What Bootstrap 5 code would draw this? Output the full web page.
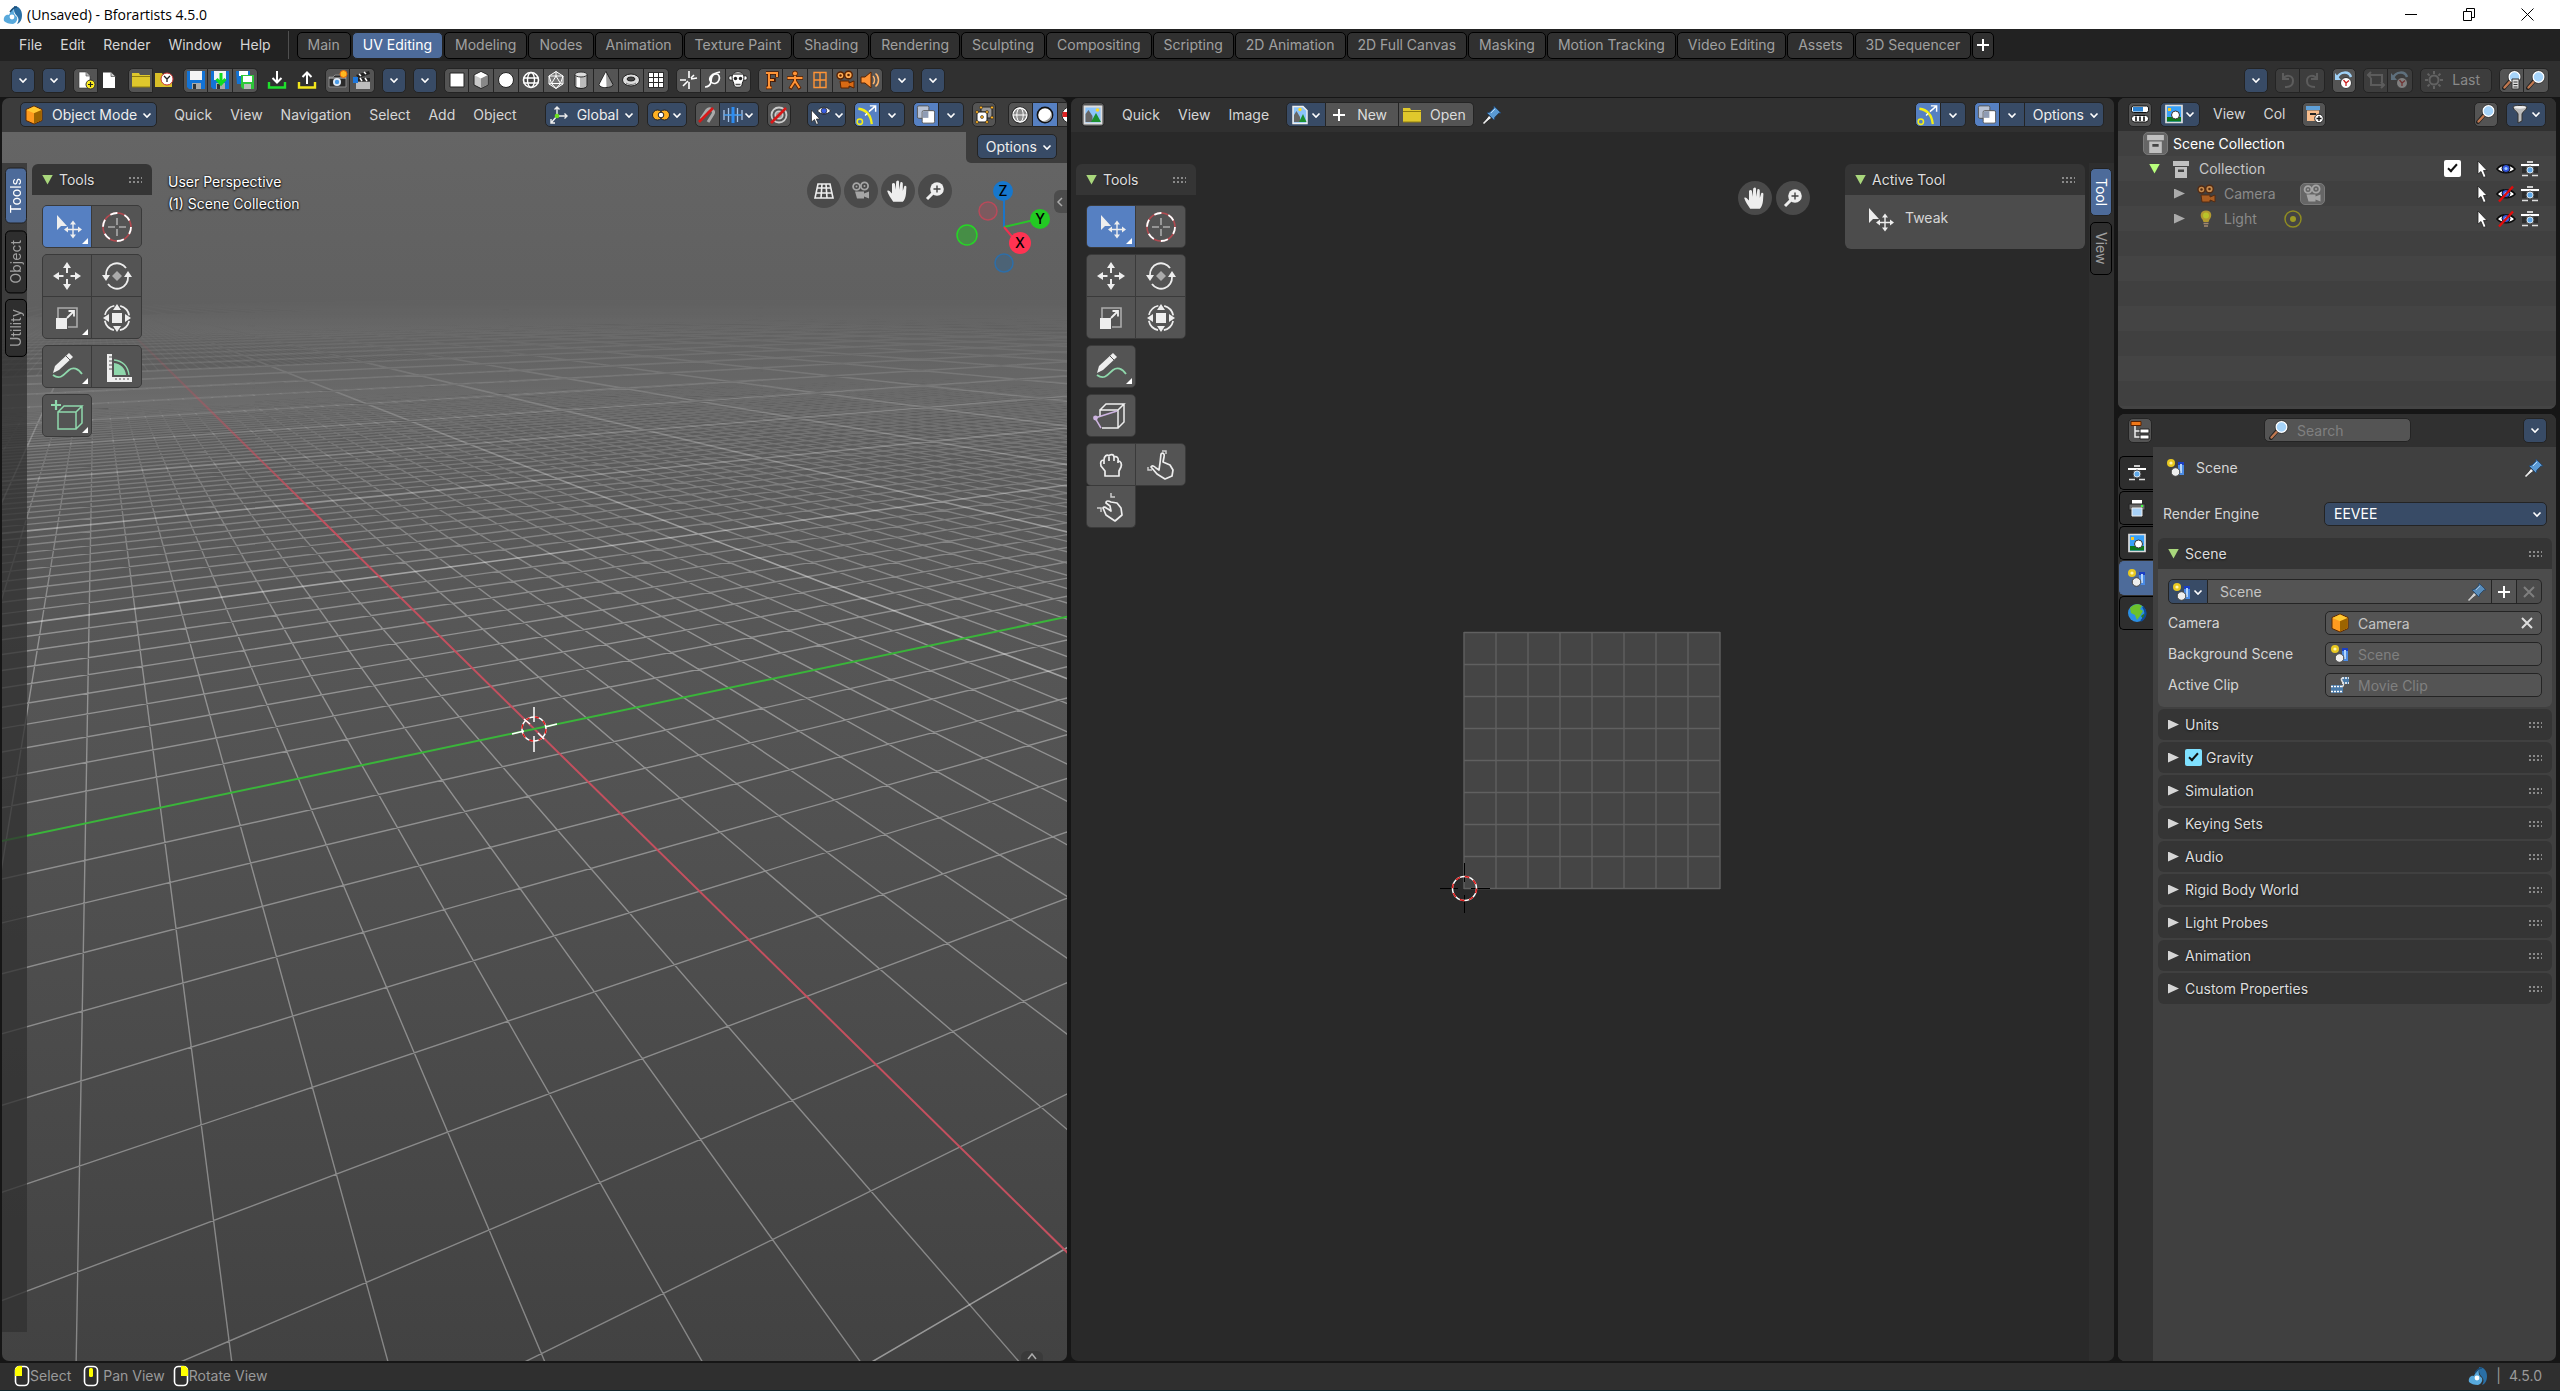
<!DOCTYPE html>
<html lang="en" data-bs-theme="dark">
<head>
<meta charset="utf-8">
<meta name="viewport" content="width=device-width, initial-scale=1">
<title>(Unsaved) - Bforartists 4.5.0</title>
<link rel="stylesheet" href="https://cdn.jsdelivr.net/npm/bootstrap@5.3.0/dist/css/bootstrap.min.css">
<script src="https://cdn.jsdelivr.net/npm/bootstrap@5.3.0/dist/js/bootstrap.bundle.min.js"></script>
<style>
:root{--hdr:#303030;--menu:#384b66;--btnc:#545454;--act:#5680c2;--line:#242424}
body{font-family:Inter,"Liberation Sans",sans-serif;font-size:14px;line-height:20px;color:#d6d6d6;background:#161616;overflow:hidden}
svg{display:block;flex:none}
.i20{width:20px;height:20px}
.i36{width:36px;height:36px}
.titlebar{height:29px;background:#fff;color:#000;font:14px/20px "Open Sans",sans-serif;padding-left:3px}
.titlebar button{width:58px;height:29px;border:0;background:none;display:grid;place-items:center}
.topbar{height:32px;background:#222;padding:2px 0 2px 10px}
.menu-link{color:#d6d6d6;padding:0 9px;text-decoration:none;white-space:nowrap}
.ws-tabs{display:flex;gap:1px}
.ws-tab{height:27px;padding:0 10px;border:1px solid #000;border-radius:5px;background:#303030;color:#a0a0a0;white-space:nowrap}
.ws-tab.active{background:#4d6b9a;color:#fff;border-color:#222}
.toolbar{height:36px;background:var(--hdr);padding:2px 11px 0;gap:7px}
.ub{flex:none;height:25px;min-width:24px;padding:0;border:1px solid var(--line);background:var(--btnc);color:#dcdcdc;border-radius:5px;display:inline-flex;align-items:center;justify-content:center;font-size:14px;line-height:20px;white-space:nowrap;overflow:hidden}
.btn-group>.ub{flex:none;min-width:25px}
.btn-group>.ub:not(:first-child){border-left:0;border-top-left-radius:0;border-bottom-left-radius:0}
.btn-group>.ub:not(:last-child){border-top-right-radius:0;border-bottom-right-radius:0}
.ub.lbl{padding:0 3px}
.ub-menu{background:var(--menu);color:#eee}
.ub-on{background:var(--act)}
.ub-flat,.btn-group>.ub-flat{background:none;border-color:transparent;min-width:23px}
.ub-dim{background:#3d3d3d;color:#8a8a8a}
.ub-dim svg{opacity:.35}
.ub:hover{background-color:#656565}
.areas{flex:1;min-height:0;display:grid;grid-template-columns:1065fr 1043fr 438px;gap:4px;padding:1px 4px 2px 2px}
.area{min-height:0;min-width:0;border-radius:7px;overflow:hidden;display:flex;flex-direction:column}
.hdr{height:34px;background:var(--hdr);flex:none;display:flex;align-items:center;padding:0 10px 1px}
.hdr-view{--hdr:#3c3c3c;padding:0 0 1px 18px}
.hdr-side{height:33px}
.hdr-gap{gap:8px}
.canvas{position:relative;flex:1;min-height:0;display:flex}
.canvas>.scene{position:absolute;inset:0;width:100%;height:100%}
.over{position:relative}
.vtabs{width:25px;padding:5px 0 0 3px;margin:31px 0 29px;gap:6px;display:flex;flex-direction:column;background:rgba(48,48,48,.75)}
.vtabs.right{margin-bottom:0;padding-left:1px}
.vtab{writing-mode:vertical-rl;border:1px solid #000;background:#2e2e2e;color:#a0a0a0;border-radius:5px;padding:9px 0;width:22px;line-height:20px}
.vtab.active{background:#4d6b9a;color:#fff;border-color:#222}
.flip{transform:rotate(180deg)}
.pnl-head{height:31px;background:#353535;display:flex;align-items:center;padding:0 10px;text-shadow:0 1px 2px #0008;border-radius:6px;color:#dedede}
.pnl-open{border-radius:6px 6px 0 0}
.tri{width:11px;height:10px;background:#d6d6d6;clip-path:polygon(0 0,100% 50%,0 100%);margin-right:6px;flex:none}
.tri-d{background:#a9d77c;clip-path:polygon(0 0,100% 0,50% 100%)}
.grip{margin-left:auto;width:14px;height:8px;background:radial-gradient(circle,#8a8a8a 30%,transparent 40%) 0 0/4px 4px}
.tg{display:grid;grid-template-columns:48px 49px;gap:1px;background:#3a3a3a;border:1px solid #3a3a3a;border-radius:5px;overflow:hidden;width:100px}
.tg.one{grid-template-columns:48px;width:50px}
.tg button{height:41px;border:0;background:var(--btnc);display:grid;place-items:center;position:relative;padding:0}
.tg button.on{background:var(--act)}
.tg button.more::after{content:"";position:absolute;right:3px;bottom:3px;border:3px solid;border-color:transparent #fff #fff transparent}
.shelf{width:120px;margin:32px 0 0 5px}
.tools{display:flex;flex-direction:column;gap:6px;padding:10px 10px 0}
.navs{display:flex;gap:3px;margin:11px 3px 0 0}
.navb{width:34px;height:34px;border:0;border-radius:50%;background:#4a4a4a;display:grid;place-items:center;padding:0}
.vtext{color:#fff;font-size:14px;line-height:22px;text-shadow:0 0 2px #000,0 1px 2px #000;margin:39px 0 0 16px}
.opt-pad{background:#3c3c3c;padding:2px 10px 4px 11px;border-radius:0 0 0 5px}
.peek{border:0;padding:0;background:#4c4c4c;width:13px;height:23px;margin-top:27px}
.peek-up{background:#3a3a3a;width:22px;height:10px;border:0;padding:0}
.trow{height:25px;display:flex;align-items:center}
.trow:nth-child(odd){background:#404040}.trow:nth-child(even){background:#444}
.trow .acts{margin-left:auto;padding-right:16px;display:flex;align-items:center;gap:4px}
.trow .chk{margin-right:7px}
.hold{border:1px solid #7a7a7a;border-radius:5px;background:#666}
.chk{appearance:none;width:17px;height:17px;border-radius:2px;background:#7fe1ff;position:relative;margin:0;flex:none}
.chk::before{content:"";position:absolute;left:6px;top:2px;width:5px;height:10px;border:solid #111;border-width:0 2px 2px 0;transform:rotate(42deg)}
.chk.wh{background:#fff}
.ptabs{width:35px;flex:none;padding:9px 0 0 1px;gap:1px;display:flex;flex-direction:column;background:#303030}
.ptab{height:34px;border:1px solid #000;border-right:0;border-radius:5px 0 0 5px;background:#2e2e2e;display:grid;place-items:center;padding:0}
.ptab.on{background:#4d6b9a;border-color:#4d6b9a}
.fld{height:24px;min-width:0;border:1px solid var(--line);border-radius:5px;background:var(--btnc);display:flex;align-items:center;color:#c4c4c4}
.fld input{background:none;border:0;color:inherit;flex:1;min-width:0;width:0;height:22px;padding:0;outline:0}
.fld input::placeholder{color:#808080;opacity:1}
.findbox{width:147px;margin-left:112px}
.eng{height:24px;border:1px solid var(--line);border-radius:5px;background:var(--menu);color:#fff;width:100%;appearance:none;padding:0 9px}
.lab{width:157px;flex:none}
.status{height:28px;background:#2f2f2f;border-bottom:1px solid #14282c;color:#9a9a9a;padding:0 14px 2px}
</style>
</head>
<body class="vh-100 d-flex flex-column">
<svg width="0" height="0" class="position-absolute" aria-hidden="true">
<defs>
<symbol id="chev" viewBox="0 0 12 12"><path d="M2.5 4.5 6 8l3.5-3.5" fill="none" stroke="#fff" stroke-width="1.6"/></symbol>
<symbol id="plus" viewBox="0 0 20 20"><path d="M10 4v12M4 10h12" stroke="#fff" stroke-width="2"/></symbol>
<symbol id="xx" viewBox="0 0 20 20"><path d="m5 5 10 10M15 5 5 15" stroke="#ddd" stroke-width="2"/></symbol>
<symbol id="bfa" viewBox="0 0 20 20"><path d="M11 1c5 0 8 4 8 9s-2 8-5 9c2-3 2-6 0-8s-3-4-3-6z" fill="#2a6fa5"/><path d="M1 16c-1-4 2-7 5-6 1-2 2-5 5-7-1 4 0 7 3 9 1 3-1 6-4 7-4 0-7-1-9-3z" fill="#58a9dc"/><circle cx="9" cy="12" r="2.4" fill="#fff"/><path d="M7 7c2-3 4-5 7-5" stroke="#1c4d78" fill="none" stroke-width="1.4"/></symbol>
<symbol id="newf" viewBox="0 0 20 20"><path d="M3 2h7l4 4v12H3z" fill="#fff" stroke="#333" stroke-width=".6"/><path d="M10 2v4h4" fill="#bbb" stroke="#444" stroke-width=".6"/><circle cx="14.5" cy="14.5" r="4.5" fill="#ffee20" stroke="#333"/><path d="M14.500 12v5M12 14.500h5" stroke="#222" stroke-width="1.2"/></symbol>
<symbol id="page" viewBox="0 0 20 20"><path d="M4 2.500h8l4 4V18H4z" fill="#fff"/><path d="M12 2.500v4h4" fill="#ccc" stroke="#555" stroke-width=".7"/></symbol>
<symbol id="fold" viewBox="0 0 20 20"><path d="M1 3h7l1 2h10v12H1z" fill="#e0c82c"/><path d="M1 6.500h18M1 17h18" stroke="#8f7c10"/></symbol>
<symbol id="foldc" viewBox="0 0 20 20"><path d="M1 3h7l1 2h9v12H1z" fill="#d8be28"/><circle cx="13" cy="9" r="6" fill="#fff" stroke="#c33"/><path d="m10 6 3 3 3-3M13 9v3" fill="none" stroke="#222" stroke-width="1.3"/></symbol>
<symbol id="save" viewBox="0 0 20 20"><path d="M1 1h18v18H3l-2-2z" fill="#1273d6"/><path d="M4 1h12v9H4z" fill="#f4f4f4"/><path d="M6 13h9v6H6z" fill="#aaa"/><path d="M7 14h3v5H7z" fill="#333"/></symbol>
<symbol id="saved" viewBox="0 0 20 20"><use href="#save"/><path d="M11 3v10M6.500 9l4.500 5 4.500-5" fill="none" stroke="#10dd20" stroke-width="3"/></symbol>
<symbol id="savec" viewBox="0 0 20 20"><path d="M1 1h14v13H2z" fill="#1273d6"/><path d="M4 1h9v5H4z" fill="#fff"/><path d="M6 5h13v14H8l-2-2z" fill="#2ec83a"/><path d="M8 6h9v6H8z" fill="#fff"/><path d="M9 14h7v5H9z" fill="#bbb"/></symbol>
<symbol id="imp" viewBox="0 0 20 20"><path d="M2 12v5.500h16V12" fill="none" stroke="#1ee02c" stroke-width="2.400"/><path d="M10 1v11M5.500 8 10 12.500 14.500 8" fill="none" stroke="#fff" stroke-width="2"/></symbol>
<symbol id="exp" viewBox="0 0 20 20"><path d="M2 12v5.500h16V12" fill="none" stroke="#f2e61c" stroke-width="2.400"/><path d="M10 14V3M5.500 7 10 2.500 14.500 7" fill="none" stroke="#fff" stroke-width="2"/></symbol>
<symbol id="camr" viewBox="0 0 20 20"><path d="M1 7h4l2-2h5l2 2h4v10H1z" fill="#2b2b2b" stroke="#888"/><path d="M1 8h17" stroke="#ccc"/><circle cx="9" cy="12" r="4" fill="#dfe9f4"/><circle cx="9" cy="12" r="2.200" fill="#4b9be6"/><circle cx="15.500" cy="4" r="3.500" fill="#ffb820" stroke="#e66a10"/></symbol>
<symbol id="clap" viewBox="0 0 20 20"><path d="m4 5 13-4 1 3L6 8z" fill="#222"/><path d="m7 4 2 2m3-4 2 2" stroke="#fff" stroke-width="1.500"/><path d="M6 8h12v3H6z" fill="#222"/><path d="M8 8l2 3m3-3 2 3" stroke="#fff" stroke-width="1.500"/><path d="M4 12h14v7H4z" fill="#bdbdbd"/><path d="M1 7h5v6H1z" fill="#1f78dc"/></symbol>
<symbol id="pln" viewBox="0 0 20 20"><path d="M3 3h14v14H3z" fill="#fff" stroke="#222"/></symbol>
<symbol id="cub" viewBox="0 0 20 20"><path d="m10 1.500 7 3.500v10l-7 3.500L3 15V5z" fill="#c8c8c8" stroke="#222"/><path d="m3.500 5.300 6.500 3.200 6.500-3.200L10 2z" fill="#fff"/><path d="M10 8.500v9.400l6.500-3.200V5.300z" fill="#888"/></symbol>
<symbol id="cubo" viewBox="0 0 20 20"><path d="m10 1 8 3.500v11L10 19l-8-3.500v-11z" fill="#ff9a1f" stroke="#5c2a00"/><path d="M2.500 5 10 8.300 17.500 5 10 1.600z" fill="#ffc832"/><path d="M10 8.300v10.100l7.500-3.200V5z" fill="#9c6400"/></symbol>
<symbol id="cir" viewBox="0 0 20 20"><circle cx="10" cy="10" r="7.500" fill="#fff" stroke="#222"/></symbol>
<symbol id="sph" viewBox="0 0 20 20"><circle cx="10" cy="10" r="7.500" fill="#444" stroke="#fff" stroke-width="1.600"/><ellipse cx="10" cy="10" rx="3.500" ry="7.500" fill="none" stroke="#fff" stroke-width="1.400"/><path d="M2.500 8h15M2.500 13h15" stroke="#fff" stroke-width="1.300"/></symbol>
<symbol id="ico" viewBox="0 0 20 20"><path d="m10 1.500 7 4.500v8l-7 4.500L3 14V6z" fill="#777" stroke="#fff"/><path d="m10 6 4.500 7.500h-9zM10 1.500V6M3 6l7 0 7 0M3 14l2.500-.5M17 14l-2.500-.5M10 18.500 5.500 13.500M10 18.500l4.500-5M3 6l2.500 7.500M17 6l-2.500 7.500" fill="none" stroke="#fff"/></symbol>
<symbol id="cyl" viewBox="0 0 20 20"><path d="M4 4.500v11c0 4 12 4 12 0v-11z" fill="#bbb" stroke="#222"/><path d="M6 6v11h3V6z" fill="#fff"/><ellipse cx="10" cy="4.500" rx="6" ry="2.500" fill="#ddd" stroke="#333"/></symbol>
<symbol id="con" viewBox="0 0 20 20"><path d="m10 1.500 7 13c0 4-14 4-14 0z" fill="#999" stroke="#222"/><path d="m10 2 -6.500 12.500c1 2 4 3 7 2.600z" fill="#fff"/></symbol>
<symbol id="tor" viewBox="0 0 20 20"><ellipse cx="10" cy="10" rx="8.500" ry="6" fill="#ddd" stroke="#222"/><ellipse cx="10" cy="9" rx="4" ry="2" fill="#444" stroke="#222"/><path d="M5 13c3 2 7 2 10 0" stroke="#777" fill="none"/></symbol>
<symbol id="grd" viewBox="0 0 20 20"><path d="M2 2h16v16H2z" fill="#2c2c2c"/><path d="M3 3h4v4H3zM8 3h4v4H8zM13 3h4v4h-4zM3 8h4v4H3zM8 8h4v4H8zM13 8h4v4h-4zM3 13h4v4H3zM8 13h4v4H8zM13 13h4v4h-4z" fill="#fff"/></symbol>
<symbol id="emp" viewBox="0 0 20 20"><path d="M10 1v7M10 12v7M1 10h6M12 9l6-1M4 16l5-5M12 8l3-3" stroke="#fff" stroke-width="1.600"/></symbol>
<symbol id="crv" viewBox="0 0 20 20"><path d="M2 17c3 0 5-1 6-5 0-4 1-8 5-8 3 0 4 3 3 6s-5 5-8 2 0-8 5-9l4-1" fill="none" stroke="#fff" stroke-width="1.700"/></symbol>
<symbol id="mon" viewBox="0 0 20 20"><circle cx="3" cy="8" r="2.300" fill="#fff" stroke="#222"/><circle cx="17" cy="8" r="2.300" fill="#fff" stroke="#222"/><path d="M4 7c0-7 12-7 12 0 0 4-2 5-2 8s-8 3-8 0S4 11 4 7z" fill="#fff" stroke="#222"/><circle cx="7.500" cy="8.500" r="1.700" fill="#222"/><circle cx="12.500" cy="8.500" r="1.700" fill="#222"/><path d="M7.500 14.500h5M5 4h10" stroke="#555" stroke-width="1.400"/></symbol>
<symbol id="fnt" viewBox="0 0 20 20"><path d="M5 3h11v4.500M5 17.500h6M8 3v14.500M8 10h5M13 8v4" fill="none" stroke="#4a1800" stroke-width="3.600"/><path d="M5 3h11v4M5.500 17.500h5M8 3v14M8 10h5" fill="none" stroke="#ff9436" stroke-width="2"/></symbol>
<symbol id="arm" viewBox="0 0 20 20"><circle cx="10" cy="3.500" r="2.500" fill="#ff9436" stroke="#5a2200"/><path d="M2 8h16M10 8v5M10 11l-5 8M10 11l5 8" stroke="#5a2200" stroke-width="3.600"/><path d="M2.500 8h15M10 6v5l-4.500 7M10 11l4.500 7" fill="none" stroke="#ff9436" stroke-width="2"/></symbol>
<symbol id="lat" viewBox="0 0 20 20"><path d="M4 2.500h12v15H4zM10 2.500v15M4 10h12" fill="none" stroke="#ff9436" stroke-width="1.400" /></symbol>
<symbol id="mov" viewBox="0 0 20 20"><circle cx="5.500" cy="5.500" r="3.500" fill="#ffab52" stroke="#5a2200" stroke-width="1.400"/><circle cx="13.500" cy="5" r="3.800" fill="#ffab52" stroke="#5a2200" stroke-width="1.400"/><circle cx="5.500" cy="5.500" r="1.200" fill="#5a2200"/><circle cx="13.500" cy="5" r="1.300" fill="#5a2200"/><path d="M5 11h9v2l5-2v7l-5-2v2H6z" fill="#d96a14" stroke="#5a2200"/></symbol>
<symbol id="movg" viewBox="0 0 20 20"><circle cx="5.500" cy="5.500" r="3.400" fill="none" stroke="#a5a5a5" stroke-width="1.800"/><circle cx="13.500" cy="5" r="3.600" fill="none" stroke="#a5a5a5" stroke-width="1.800"/><circle cx="5.500" cy="5.500" r="1" fill="#a5a5a5"/><circle cx="13.500" cy="5" r="1" fill="#a5a5a5"/><path d="M4 10.500h9v2l5-2v7l-5-2v2H6z" fill="#a5a5a5"/></symbol>
<symbol id="spk" viewBox="0 0 20 20"><path d="M1 7h4l6-5v16l-6-5H1z" fill="#ff9436" stroke="#5a2200"/><path d="M13 6c2 2 2 6 0 8M15.500 3.500c4 3 4 10 0 13" fill="none" stroke="#ffb46c" stroke-width="1.500"/></symbol>
<symbol id="undo" viewBox="0 0 20 20"><path d="M5 3v6h6M5 9c3-5 10-4 10 2s-5 6-8 6" fill="none" stroke="#999" stroke-width="2"/></symbol>
<symbol id="redo" viewBox="0 0 20 20"><path d="M15 3v6H9M15 9C12 4 5 5 5 11s5 6 8 6" fill="none" stroke="#999" stroke-width="2"/></symbol>
<symbol id="hist" viewBox="0 0 20 20"><path d="M3 8c3-7 12-7 14-1" fill="none" stroke="#9fd0f5" stroke-width="2.500"/><path d="M1 3v7h6z" fill="#9fd0f5"/><circle cx="12" cy="13" r="5.500" fill="#fff" stroke="#333"/><path d="m9.500 10 2.500 3 3-2.500M12 13v3" fill="none" stroke="#c22" stroke-width="1.300"/></symbol>
<symbol id="rpt" viewBox="0 0 20 20"><path d="M2 5h14v7M18 15H5V8M5 2 2 5l3 3M15 12l3 3-3 3" fill="none" stroke="#999" stroke-width="2"/></symbol>
<symbol id="gear" viewBox="0 0 20 20"><circle cx="10" cy="10" r="4.500" fill="none" stroke="#aaa" stroke-width="2"/><path d="M10 1v3M10 16v3M1 10h3M16 10h3M3.600 3.600l2 2M14.400 14.400l2 2M16.400 3.600l-2 2M5.600 14.400l-2 2" stroke="#aaa" stroke-width="2"/></symbol>
<symbol id="mag" viewBox="0 0 20 20"><path d="m2 18 6-7" stroke="#222" stroke-width="4" stroke-linecap="round"/><path d="m2.500 17.500 5.500-6" stroke="#c07850" stroke-width="2.400" stroke-linecap="round"/><circle cx="12.500" cy="7" r="5.500" fill="#a6d4fa" stroke="#fff" stroke-width="1.500"/><circle cx="12.500" cy="7" r="6.400" fill="none" stroke="#222" stroke-width=".6"/></symbol>
<symbol id="magd" viewBox="0 0 20 20"><use href="#mag"/><path d="M10 9h7v10h-7z" fill="#ddd" stroke="#333"/><path d="M11.500 12h4M11.500 14.500h4M11.500 17h4" stroke="#333"/></symbol>
<symbol id="axes" viewBox="0 0 20 20"><path d="M8 11V2M5.500 4.500 8 2l2.500 2.500M8 11h10M15.500 8.500 18 11l-2.500 2.500M8 11l-6 7M2 14v4h4" fill="none" stroke="#eee" stroke-width="1.400"/><circle cx="8" cy="11" r="2.300" fill="#6ce020"/></symbol>
<symbol id="piv" viewBox="0 0 20 20"><circle cx="6.500" cy="10" r="5" fill="#ffb020" stroke="#222"/><circle cx="13.500" cy="10" r="5" fill="#ffb020" stroke="#222"/><circle cx="10" cy="10" r="2.800" fill="#fff" stroke="#222"/></symbol>
<symbol id="snap" viewBox="0 0 20 20"><path d="m4 14 6-9c3-3 8 1 6 4l-5 8" fill="none" stroke="#aaa" stroke-width="3"/><path d="m2 17 14-14" stroke="#d81818" stroke-width="2.600"/></symbol>
<symbol id="incr" viewBox="0 0 20 20"><path d="M1 5v10M5.500 3v14M14.500 3v14M19 5v10" stroke="#a8c4e8" stroke-width="1.300"/><path d="M1 10h18" stroke="#4ba0f0" stroke-width="1.300"/><path d="M10 2v16" stroke="#2d8cf0" stroke-width="3"/></symbol>
<symbol id="prop" viewBox="0 0 20 20"><circle cx="10" cy="10" r="7.500" fill="none" stroke="#ccc" stroke-width="1.800"/><circle cx="10" cy="10" r="3.800" fill="#999" stroke="#ccc" stroke-width="1.600"/><path d="M2 18 17 3" stroke="#d81818" stroke-width="2.600"/></symbol>
<symbol id="eyec" viewBox="0 0 24 20"><path d="M9 6c3-5 10-5 13 0-3 4-10 4-13 0z" fill="#fff" stroke="#111" stroke-width=".8"/><circle cx="15.500" cy="5.800" r="2.800" fill="#3a5ee0" stroke="#111" stroke-width=".6"/><path d="M3 5v12l3-2.500 2 5 1.800-1-2-4.500h3.500z" fill="#fff" stroke="#222" stroke-width=".7"/></symbol>
<symbol id="giz" viewBox="0 0 24 24"><path d="M3 6c8 1 13 7 14 16" fill="none" stroke="#f4ee18" stroke-width="2.400"/><circle cx="4.500" cy="19.500" r="2.800" fill="none" stroke="#f4ee18" stroke-width="1.600"/><path d="m10 13 2-2M14 9l7-6M15 3h6v6" fill="none" stroke="#fff" stroke-width="1.500"/></symbol>
<symbol id="ovl" viewBox="0 0 24 24"><rect x="3" y="3" width="12" height="13" rx="1.500" fill="#b8c2d4" stroke="#555"/><rect x="8" y="8" width="13" height="13" rx="1.500" fill="#fff" stroke="#555"/><rect x="8.500" y="8.500" width="6" height="7" fill="#8f9cb4"/></symbol>
<symbol id="xray" viewBox="0 0 20 20"><path d="M7 2h11v11h-5V7H7z" fill="#999" stroke="#222"/><path d="M3 7h10v10H3z" fill="#fff" stroke="#222"/><g fill="#ffb020" stroke="#222" stroke-width=".6"><circle cx="3" cy="7" r="1.500"/><circle cx="13" cy="7" r="1.500"/><circle cx="3" cy="17" r="1.500"/><circle cx="13" cy="17" r="1.500"/><circle cx="8" cy="12" r="1.500"/><circle cx="18" cy="2.500" r="1.500"/><circle cx="7" cy="2.500" r="1.500"/><circle cx="18" cy="12.500" r="1.500"/></g></symbol>
<symbol id="wir" viewBox="0 0 20 20"><circle cx="10" cy="10" r="7.500" fill="#888" stroke="#222" stroke-width="2.200"/><circle cx="10" cy="10" r="7" fill="none" stroke="#fff" stroke-width="1.300"/><ellipse cx="10" cy="10" rx="3.200" ry="7" fill="none" stroke="#fff"/><path d="M3 10h14" stroke="#fff"/></symbol>
<symbol id="sol" viewBox="0 0 20 20"><circle cx="10" cy="10" r="7.600" fill="#fff" stroke="#111" stroke-width="1.600"/><path d="M15 5c3 5-1 11-7 11 6 3 12-4 7-11z" fill="#999"/></symbol>
<symbol id="matp" viewBox="0 0 20 20"><circle cx="10" cy="10" r="8" fill="#fff" stroke="#222"/><path d="M2.500 7h5v5h-5zM7.500 2.500h5V7h-5zM7.500 12h5v5h-5zM12.500 7h5v5h-5z" fill="#d22"/></symbol>
<symbol id="img" viewBox="0 0 20 20"><path d="M1.500 1.500h17v17h-17z" fill="#8cc4fa" stroke="#ddd" stroke-width="1.800"/><circle cx="14.500" cy="5" r="1.800" fill="#ffd820"/><path d="m2.500 17 0-8 3-4 4 6v6z" fill="#666"/><path d="m8 17 5-9 5 9z" fill="#1c9030"/></symbol>
<symbol id="imgf" viewBox="0 0 20 20"><path d="M3 1.500h10l4 4v13H3z" fill="#8cc4fa" stroke="#eee" stroke-width="1.500"/><path d="m4 17 0-7 2.500-4 3.500 6v5z" fill="#666"/><path d="m9 17 4-8 3.500 8z" fill="#1c9030"/><circle cx="10" cy="4.500" r="1.700" fill="#ffd820"/></symbol>
<symbol id="pin" viewBox="0 0 20 20"><path d="m2 18 5-7 2 2z" fill="#fff"/><path d="m1.500 18.500 6-6" stroke="#eee" stroke-width="1.600"/><path d="m5 8 3-1 4-4 0-2 7 7-2 0-4 4-1 3z" fill="#5a9ad4" stroke="#27496e"/><path d="m9 8 4-4" stroke="#b8d8f4"/></symbol>
<symbol id="outl" viewBox="0 0 20 20"><rect x="1.500" y="2" width="17" height="6.500" rx="2" fill="#fff" stroke="#111"/><path d="M3 3h10v4.500H3z" fill="#2d82d0"/><rect x="1.500" y="11.500" width="17" height="6.500" rx="3" fill="#fff" stroke="#111"/><path d="M6 12.500v4.500M10 12.500v4.500M14 12.500v4.500" stroke="#111" stroke-width="1.600"/></symbol>
<symbol id="vlay" viewBox="0 0 20 20"><path d="M2 1.500h16v17H2z" fill="#38a0f8" stroke="#ddd" stroke-width="1.700"/><path d="M3 13h14v4.500H3z" fill="#0e7a1c"/><path d="M4 4h3v3H4z" fill="#ffc820"/><circle cx="11.500" cy="11" r="4" fill="#fff" stroke="#333"/></symbol>
<symbol id="ncol" viewBox="0 0 20 20"><path d="M2 2h14v4H2z" fill="#5fa0d8"/><path d="M3 6.500h12V17H3z" fill="#f8bd8c"/><path d="M6 9h6v2H6z" fill="#222"/><circle cx="15" cy="14.500" r="4.300" fill="#fff" stroke="#222"/><path d="M15 12v5M12.500 14.500h5" stroke="#111" stroke-width="1.300"/></symbol>
<symbol id="fun" viewBox="0 0 20 20"><path d="M3 3c0-2 14-2 14 0 0 3-5 5-5 7v7l-4 2v-9c0-2-5-4-5-7z" fill="#bbb" stroke="#333"/><ellipse cx="10" cy="3.300" rx="6" ry="1.400" fill="#eee"/></symbol>
<symbol id="col" viewBox="0 0 20 20"><path d="M2 2h16v5H2zM4 8h12v11H4z" fill="#c0c0c0"/><path d="M7 10.500h6V13H7z" fill="#444"/></symbol>
<symbol id="cur" viewBox="0 0 20 20"><path d="M6 2v13l3-2.500 2.500 6 2.500-1-2.500-6H15z" fill="#fff" stroke="#222" stroke-width=".8"/></symbol>
<symbol id="eye" viewBox="0 0 20 20"><path d="M1 10C5 4.500 15 4.500 19 10 15 15 5 15 1 10z" fill="#fff" stroke="#0a0a0a" stroke-width="1.600"/><circle cx="10" cy="9.500" r="4" fill="#3558e0" stroke="#111"/><circle cx="10" cy="9.500" r="1.600" fill="#9cc8ff"/></symbol>
<symbol id="eyex" viewBox="0 0 20 20"><use href="#eye"/><path d="M3 17.500 17 2.500" stroke="#e00c0c" stroke-width="2.400"/></symbol>
<symbol id="rnd" viewBox="0 0 20 20"><path d="M7 3h6" stroke="#fff" stroke-width="1.600"/><path d="M1 6h18" stroke="#fff" stroke-width="2"/><path d="M2 8h16v6H2z" fill="#2c2c2c"/><path d="M2 16.500h6M12 16.500h6" stroke="#ddd" stroke-width="1.400"/><circle cx="10" cy="11" r="4" fill="#dfe9f2" stroke="#444"/><circle cx="10" cy="11" r="2.500" fill="#5fa8e8"/></symbol>
<symbol id="bulb" viewBox="0 0 20 20"><path d="M10 1.500c6 0 6.500 6 3.500 9L12.500 13h-5l-1-2.500c-3-3-2.500-9 3.500-9z" fill="#b39a30"/><circle cx="10" cy="6.500" r="3" fill="#b9c42a"/><path d="M7.500 14.500h5M8 17h4" stroke="#a58a70" stroke-width="1.600"/></symbol>
<symbol id="tree" viewBox="0 0 20 20"><path d="M1 1.500h10v4H1z" fill="#f07818" stroke="#5a2200"/><path d="M5 6v11h5M5 11h5" fill="none" stroke="#eee" stroke-width="1.500"/><path d="M10 9h9v4h-9zM10 15h9v4h-9z" fill="#fff" stroke="#222"/></symbol>
<symbol id="scn" viewBox="0 0 20 20"><path d="M12 4h6v13h-6z" fill="#4a8ae4"/><path d="M12 4h6v3h-6z" fill="#1a3ec4"/><path d="M14 6h2v9h-2z" fill="#b4d4fa"/><circle cx="5" cy="5" r="4" fill="#e8c820"/><circle cx="5" cy="5" r="1.600" fill="#fff6b0"/><circle cx="9.500" cy="14" r="4.300" fill="#eee" stroke="#444"/></symbol>
<symbol id="prn" viewBox="0 0 20 20"><path d="M5 2h10v4H5z" fill="#fff"/><path d="M2 6h16v6H2z" fill="#6b6b6b" stroke="#222"/><path d="M5 10h10v8H5z" fill="#a8d2f8" stroke="#eee"/><circle cx="15" cy="8" r="1.200" fill="#4f4"/></symbol>
<symbol id="wld" viewBox="0 0 20 20"><circle cx="10" cy="10" r="9" fill="#2b8fe4"/><path d="M3 5c3-4 9-5 12-2l-2 3 3 2-3 5-3 4-2-5-4-2z" fill="#6cc22c"/><path d="M14 13l4-3-2 6z" fill="#2e7a1c"/><path d="M16 4c4 5 3 10-2 14" stroke="#0d4a96" stroke-width="2" fill="none"/></symbol>
<symbol id="clip" viewBox="0 0 20 20"><path d="M1 10h12v8H1zM12 2h7v7h-7z" fill="#4a7aa8"/><path d="M1 11.500h12M1 16.500h12M12 3h7M12 8h7" stroke="#fff" stroke-width="1.500" stroke-dasharray="2 1"/><path d="M12 3c-3 3 5 5 0 9" fill="none" stroke="#ddd" stroke-width="1.500"/></symbol>
<symbol id="t-sel" viewBox="0 0 36 36"><path d="M8 6v15l4-4 6 0z" fill="#eee"/><path d="M24 14v13M17.500 20.500h13" stroke="#eee" stroke-width="1.400"/><path d="m24 11.500 3 4h-6zM24 29.500l3-4h-6zM15 20.500l4-3v6zM33 20.500l-4-3v6z" fill="#eee"/></symbol>
<symbol id="t-cur" viewBox="0 0 36 36"><circle cx="18" cy="18" r="14" fill="none" stroke="#b04a50" stroke-width="1.600"/><circle cx="18" cy="18" r="14" fill="none" stroke="#fff" stroke-width="1.800" stroke-dasharray="7.330 7.330"/><path d="M18 9v7M18 20v7M9 18h7M20 18h7" stroke="#aaa" stroke-width="1.600"/></symbol>
<symbol id="t-mov" viewBox="0 0 36 36"><path d="M18 10v5M18 21v5M10 18h4.500M21.500 18H26" stroke="#eee" stroke-width="2"/><path d="m18 4 4 6h-8zM18 32l4-6h-8zM4 18l6-4v8zM32 18l-6-4v8z" fill="#eee"/></symbol>
<symbol id="t-rot" viewBox="0 0 36 36"><path d="M7 17a11 11 0 0 1 20-7M29 19a11 11 0 0 1-20 7" fill="none" stroke="#eee" stroke-width="1.800"/><path d="m7 23-4-6h8zM29 13l-4 6h8z" fill="#eee"/><path d="m18 13 5 5-5 5-5-5z" fill="#aaa"/></symbol>
<symbol id="t-scl" viewBox="0 0 36 36"><path d="M9 18V8h19v19H19" fill="none" stroke="#aaa" stroke-width="1.600"/><path d="M7 18h11v11H7z" fill="#eee"/><path d="m18 18 6-6M19.500 11h5.500v5.500" fill="none" stroke="#eee" stroke-width="1.800"/></symbol>
<symbol id="t-trn" viewBox="0 0 36 36"><circle cx="18" cy="18" r="12.500" fill="none" stroke="#eee" stroke-width="1.700" stroke-dasharray="13.600 6" stroke-dashoffset="-3"/><path d="M13 13h10v10H13z" fill="#eee"/><path d="m18 4 4 6h-8zM18 32l4-6h-8zM4 18l6-4v8zM32 18l-6-4v8z" fill="#eee"/></symbol>
<symbol id="t-ann" viewBox="0 0 36 36"><path d="m4 24 2-7L20 4l4 4L10 21z" fill="#eee"/><path d="m17 7 4 4" stroke="#555"/><path d="M4 26c8 6 12-2 16-5s9-2 13 4" fill="none" stroke="#8fd8ac" stroke-width="1.800"/></symbol>
<symbol id="t-mea" viewBox="0 0 36 36"><path d="M8 5h5v23h20v5H8z" fill="#eee"/><path d="M15 26V14c7 1 11 5 12 12z" fill="#8fd8ac"/><path d="M15 11c9 1 14 7 15 15" fill="none" stroke="#8fd8ac" stroke-width="1.300"/><path d="M10 8h3M10 12h3M10 16h3M10 20h3M17 29v2M21 29v2M25 29v2M29 29v2" stroke="#555"/></symbol>
<symbol id="t-add" viewBox="0 0 36 36"><path d="M9 14h18v17H9zM9 14l6-6h18l-6 6M33 8v17l-6 6" fill="none" stroke="#8fd8ac" stroke-width="1.500"/><path d="M7 2v10M2 7h10" stroke="#8fd8ac" stroke-width="2.200"/></symbol>
<symbol id="t-rip" viewBox="0 0 36 36"><path d="M7 18V12h18v18H9M7 12l6-6h18l-6 6M31 6v18l-6 6" fill="none" stroke="#eee" stroke-width="1.500"/><path d="m8 30-6-10 22-7" fill="none" stroke="#cdb4e0" stroke-width="1.500"/><circle cx="2.500" cy="20" r="2.400" fill="#cdb4e0"/></symbol>
<symbol id="t-grab" viewBox="0 0 36 36"><path d="M12 29v-5l-4-5c-1-4 0-6 3-6 0-4 3-6 5-4 1-2 5-2 5 1 3-1 5 1 4 4 3 0 4 3 3 6l-2 4v5zM11 13v4M16 10v4M21 10v4M25 13v3" fill="none" stroke="#eee" stroke-width="1.700" stroke-linejoin="round"/></symbol>
<symbol id="t-rel" viewBox="0 0 36 36"><path d="m22 32-8-5-6-7c1-2 3-1 5 1l3 2 1-7 1-9c2-2 4 0 3 3l-1 5 7 3 3 5-1 6z" fill="none" stroke="#eee" stroke-width="1.700" stroke-linejoin="round"/><path d="M19 4h4v3M5 20v3h4" fill="none" stroke="#ccc" stroke-width="1.500"/></symbol>
<symbol id="t-pin" viewBox="0 0 36 36"><path d="m22 32-9-6-3-7c1-2 3 0 5 1l3 2-1-5-4-3c0-3 3-2 5-1l6 1 4 5 1 7z" fill="none" stroke="#eee" stroke-width="1.700" stroke-linejoin="round"/><path d="M18 4v4h4M4 19h4v4" fill="none" stroke="#ccc" stroke-width="1.500"/></symbol>
<symbol id="n-per" viewBox="0 0 20 20"><path d="M4 3h12l3 14H1zM8 3 7 17M12 3l1 14M3.500 7h13M2.500 12h15" fill="none" stroke="#eee" stroke-width="1.600"/></symbol>
<symbol id="n-han" viewBox="0 0 20 20"><path d="M6 19C4 16 2 13 1 10c1-1 2 0 4 2V4c1-1 2-1 2.400 0L8 9l.5-7c1-1 2-1 2.300 0L11 9l1-6c1-1 2 0 2 1v6l1.200-4c1-1 2 0 1.800 1-.3 4 0 9-3 12z" fill="#eee"/></symbol>
<symbol id="n-zom" viewBox="0 0 20 20"><circle cx="12" cy="8" r="6.800" fill="#eee"/><path d="m2 18 6-6" stroke="#eee" stroke-width="3"/><path d="M12 4.500v7M8.500 8h7" stroke="#444" stroke-width="1.400"/></symbol>
<symbol id="m-l" viewBox="0 0 16 22"><rect x="1.500" y="1.500" width="13" height="19" rx="4" fill="none" stroke="#fff" stroke-width="1.600"/><path d="M1 11V4l3-3h4v10z" fill="#ff0"/></symbol>
<symbol id="m-m" viewBox="0 0 16 22"><rect x="1.500" y="1.500" width="13" height="19" rx="4" fill="none" stroke="#fff" stroke-width="1.600"/><rect x="6" y="3" width="4" height="9" rx="1.500" fill="#ff0"/></symbol>
<symbol id="m-r" viewBox="0 0 16 22"><rect x="1.500" y="1.500" width="13" height="19" rx="4" fill="none" stroke="#fff" stroke-width="1.600"/><path d="M15 11V4l-3-3H8v10z" fill="#ff0"/></symbol>
</defs>
</svg>

<header class="titlebar d-flex align-items-center">
  <svg class="i20 me-1"><use href="#bfa"/></svg><span>(Unsaved) - Bforartists 4.5.0</span>
  <div class="ms-auto d-flex pe-1">
    <button aria-label="Minimize"><svg width="13" height="13"><path d="M0 6.500h12" stroke="#000"/></svg></button>
    <button aria-label="Restore"><svg width="13" height="13"><path d="M.5 3.500h8v9h-8zM3.500 3V.5h8v9H9" fill="none" stroke="#000"/></svg></button>
    <button aria-label="Close"><svg width="13" height="13"><path d="m.5.500 12 12m0-12-12 12" stroke="#000"/></svg></button>
  </div>
</header>

<nav class="topbar d-flex align-items-center">
  <a class="menu-link" href="#">File</a><a class="menu-link" href="#">Edit</a><a class="menu-link" href="#">Render</a><a class="menu-link" href="#">Window</a><a class="menu-link" href="#">Help</a>
  <div class="vr mx-2 opacity-25"></div>
  <div class="ws-tabs">
    <button class="ws-tab">Main</button><button class="ws-tab active">UV Editing</button><button class="ws-tab">Modeling</button><button class="ws-tab">Nodes</button><button class="ws-tab">Animation</button><button class="ws-tab">Texture Paint</button><button class="ws-tab">Shading</button><button class="ws-tab">Rendering</button><button class="ws-tab">Sculpting</button><button class="ws-tab">Compositing</button><button class="ws-tab">Scripting</button><button class="ws-tab">2D Animation</button><button class="ws-tab">2D Full Canvas</button><button class="ws-tab">Masking</button><button class="ws-tab">Motion Tracking</button><button class="ws-tab">Video Editing</button><button class="ws-tab">Assets</button><button class="ws-tab">3D Sequencer</button><button class="ws-tab px-0" aria-label="Add workspace"><svg class="i20"><use href="#plus"/></svg></button>
  </div>
</nav>

<div class="toolbar d-flex align-items-center">
  <button class="ub ub-menu" aria-label="File menu"><svg width="12" height="12"><use href="#chev"/></svg></button>
  <button class="ub ub-menu" aria-label="Load menu"><svg width="12" height="12"><use href="#chev"/></svg></button>
  <div class="btn-group"><button class="ub" aria-label="New file"><svg class="i20"><use href="#newf"/></svg></button><button class="ub ub-flat" aria-label="New"><svg class="i20"><use href="#page"/></svg></button></div>
  <div class="btn-group"><button class="ub" aria-label="Open"><svg class="i20"><use href="#fold"/></svg></button><button class="ub ub-flat" aria-label="Open recent"><svg class="i20"><use href="#foldc"/></svg></button></div>
  <div class="btn-group"><button class="ub" aria-label="Save"><svg class="i20"><use href="#save"/></svg></button><button class="ub" aria-label="Save as"><svg class="i20"><use href="#saved"/></svg></button><button class="ub" aria-label="Save copy"><svg class="i20"><use href="#savec"/></svg></button></div>
  <button class="ub ub-flat" aria-label="Import"><svg class="i20"><use href="#imp"/></svg></button>
  <button class="ub ub-flat" aria-label="Export"><svg class="i20"><use href="#exp"/></svg></button>
  <div class="btn-group"><button class="ub" aria-label="Render image"><svg class="i20"><use href="#camr"/></svg></button><button class="ub" aria-label="Render animation"><svg class="i20"><use href="#clap"/></svg></button></div>
  <button class="ub ub-menu" aria-label="Render menu"><svg width="12" height="12"><use href="#chev"/></svg></button>
  <button class="ub ub-menu" aria-label="Add menu"><svg width="12" height="12"><use href="#chev"/></svg></button>
  <div class="btn-group"><button class="ub" aria-label="Plane"><svg class="i20"><use href="#pln"/></svg></button><button class="ub" aria-label="Cube"><svg class="i20"><use href="#cub"/></svg></button><button class="ub" aria-label="Circle"><svg class="i20"><use href="#cir"/></svg></button><button class="ub" aria-label="UV sphere"><svg class="i20"><use href="#sph"/></svg></button><button class="ub" aria-label="Ico sphere"><svg class="i20"><use href="#ico"/></svg></button><button class="ub" aria-label="Cylinder"><svg class="i20"><use href="#cyl"/></svg></button><button class="ub" aria-label="Cone"><svg class="i20"><use href="#con"/></svg></button><button class="ub" aria-label="Torus"><svg class="i20"><use href="#tor"/></svg></button><button class="ub" aria-label="Grid"><svg class="i20"><use href="#grd"/></svg></button></div>
  <div class="btn-group"><button class="ub" aria-label="Empty"><svg class="i20"><use href="#emp"/></svg></button><button class="ub" aria-label="Curve"><svg class="i20"><use href="#crv"/></svg></button><button class="ub" aria-label="Monkey"><svg class="i20"><use href="#mon"/></svg></button></div>
  <div class="btn-group"><button class="ub" aria-label="Text"><svg class="i20"><use href="#fnt"/></svg></button><button class="ub" aria-label="Armature"><svg class="i20"><use href="#arm"/></svg></button><button class="ub" aria-label="Lattice"><svg class="i20"><use href="#lat"/></svg></button><button class="ub" aria-label="Camera"><svg class="i20"><use href="#mov"/></svg></button><button class="ub" aria-label="Speaker"><svg class="i20"><use href="#spk"/></svg></button></div>
  <button class="ub ub-menu" aria-label="More"><svg width="12" height="12"><use href="#chev"/></svg></button>
  <button class="ub ub-menu" aria-label="More"><svg width="12" height="12"><use href="#chev"/></svg></button>
  <button class="ub ub-menu ms-auto" aria-label="Edit menu"><svg width="12" height="12"><use href="#chev"/></svg></button>
  <div class="btn-group"><button class="ub ub-dim" aria-label="Undo"><svg class="i20"><use href="#undo"/></svg></button><button class="ub ub-dim" aria-label="Redo"><svg class="i20"><use href="#redo"/></svg></button></div>
  <button class="ub" aria-label="Undo history"><svg class="i20"><use href="#hist"/></svg></button>
  <div class="btn-group"><button class="ub ub-dim" aria-label="Repeat"><svg class="i20"><use href="#rpt"/></svg></button><button class="ub ub-dim" aria-label="Repeat history"><svg class="i20"><use href="#hist"/></svg></button></div>
  <button class="ub ub-dim lbl"><svg class="i20 me-2"><use href="#gear"/></svg><span class="me-2">Last</span></button>
  <div class="btn-group"><button class="ub" aria-label="Operator search"><svg class="i20"><use href="#magd"/></svg></button><button class="ub" aria-label="Search"><svg class="i20"><use href="#mag"/></svg></button></div>
</div>

<main class="areas">
  <section class="area" aria-label="3D Viewport">
    <div class="hdr hdr-view">
      <button class="ub ub-menu lbl"><svg class="i20 me-2"><use href="#cubo"/></svg>Object Mode<svg class="ms-1" width="12" height="12"><use href="#chev"/></svg></button>
      <nav class="d-flex ps-2 me-4"><a class="menu-link" href="#">Quick</a><a class="menu-link" href="#">View</a><a class="menu-link" href="#">Navigation</a><a class="menu-link" href="#">Select</a><a class="menu-link" href="#">Add</a><a class="menu-link pe-1" href="#">Object</a></nav>
      <div class="d-flex hdr-gap">
        <button class="ub ub-menu lbl"><svg class="i20 me-2"><use href="#axes"/></svg>Global<svg class="ms-1" width="12" height="12"><use href="#chev"/></svg></button>
        <button class="ub ub-menu lbl" aria-label="Pivot"><svg class="i20"><use href="#piv"/></svg><svg width="12" height="12"><use href="#chev"/></svg></button>
        <div class="btn-group"><button class="ub" aria-label="Snap"><svg class="i20"><use href="#snap"/></svg></button><button class="ub ub-menu lbl" aria-label="Snap to"><svg class="i20"><use href="#incr"/></svg><svg width="12" height="12"><use href="#chev"/></svg></button></div>
        <button class="ub me-2" aria-label="Proportional editing"><svg class="i20"><use href="#prop"/></svg></button>
        <button class="ub ub-menu" aria-label="Visibility"><svg width="25" height="20"><use href="#eyec"/></svg><svg width="12" height="12"><use href="#chev"/></svg></button>
        <div class="btn-group"><button class="ub ub-on" aria-label="Gizmos"><svg width="24" height="23"><use href="#giz"/></svg></button><button class="ub ub-menu" aria-label="Gizmo options"><svg width="12" height="12"><use href="#chev"/></svg></button></div>
        <div class="btn-group"><button class="ub ub-on" aria-label="Overlays"><svg width="24" height="23"><use href="#ovl"/></svg></button><button class="ub ub-menu" aria-label="Overlay options"><svg width="12" height="12"><use href="#chev"/></svg></button></div>
        <button class="ub me-1" aria-label="X-ray"><svg class="i20"><use href="#xray"/></svg></button>
        <div class="btn-group"><button class="ub" aria-label="Wireframe"><svg class="i20"><use href="#wir"/></svg></button><button class="ub ub-on" aria-label="Solid"><svg class="i20"><use href="#sol"/></svg></button><button class="ub" aria-label="Material preview"><svg class="i20"><use href="#matp"/></svg></button></div>
      </div>
    </div>
    <div class="canvas">
      <svg class="scene" viewBox="2 132 1065 1229" preserveAspectRatio="xMidYMid slice" aria-label="Perspective grid">
        <defs>
          <linearGradient id="bgv" x1="0" y1="0" x2="0" y2="1"><stop offset="0" stop-color="#656565"/><stop offset="1" stop-color="#424242"/></linearGradient>
          <linearGradient id="fadeA" gradientUnits="userSpaceOnUse" x1="0" y1="310" x2="0" y2="640"><stop offset="0" stop-color="#000"/><stop offset=".2" stop-color="#262626"/><stop offset=".5" stop-color="#8a8a8a"/><stop offset="1" stop-color="#fff"/></linearGradient>
          <linearGradient id="fadeB" gradientUnits="userSpaceOnUse" x1="0" y1="295" x2="0" y2="560"><stop offset="0" stop-color="#000"/><stop offset=".2" stop-color="#262626"/><stop offset="1" stop-color="#fff"/></linearGradient>
          <linearGradient id="fadeC" gradientUnits="userSpaceOnUse" x1="0" y1="325" x2="0" y2="520"><stop offset="0" stop-color="#000"/><stop offset="1" stop-color="#fff"/></linearGradient>
          <mask id="mA" maskUnits="userSpaceOnUse" x="0" y="132" width="1070" height="1230"><rect y="132" width="1070" height="1230" fill="url(#fadeA)"/></mask>
          <mask id="mB" maskUnits="userSpaceOnUse" x="0" y="132" width="1070" height="1230"><rect y="132" width="1070" height="1230" fill="url(#fadeB)"/></mask>
          <mask id="mC" maskUnits="userSpaceOnUse" x="0" y="132" width="1070" height="1230"><rect y="132" width="1070" height="1230" fill="url(#fadeC)"/></mask>
        </defs>
        <rect x="2" y="132" width="1065" height="1229" fill="url(#bgv)"/>
        <g mask="url(#mA)"><path id="minor" fill="none" stroke="#fff" stroke-opacity=".36" stroke-width="1.400"/></g>
        <g mask="url(#mB)"><path id="major" fill="none" stroke="#fff" stroke-opacity=".45" stroke-width="1.600"/></g>
        <g mask="url(#mC)"><path id="axx" stroke="#c4505f" stroke-width="2" fill="none"/></g>
        <path id="axy" stroke="#3ab53a" stroke-width="2" fill="none"/>
        <g fill="none" stroke-width="1.500"><circle cx="534" cy="729" r="12" stroke="#fff"/><circle cx="534" cy="729" r="12" stroke="#e01818" stroke-dasharray="4.700 4.700"/><path d="M534 707v15M534 736v16M512 734l12-3M545 727l12-3M524 719l6 5M538 733l6 6" stroke="#fff"/></g>
      </svg>
      <div class="over vtabs">
        <button class="vtab flip active">Tools</button><button class="vtab flip">Object</button><button class="vtab flip">Utility</button>
      </div>
      <div class="over shelf">
        <div class="pnl-head pnl-open"><i class="tri tri-d"></i>Tools<i class="grip"></i></div>
        <div class="tools">
          <div class="tg"><button class="on more" aria-label="Select"><svg class="i36"><use href="#t-sel"/></svg></button><button aria-label="Cursor"><svg class="i36"><use href="#t-cur"/></svg></button></div>
          <div class="tg"><button aria-label="Move"><svg class="i36"><use href="#t-mov"/></svg></button><button aria-label="Rotate"><svg class="i36"><use href="#t-rot"/></svg></button><button class="more" aria-label="Scale"><svg class="i36"><use href="#t-scl"/></svg></button><button aria-label="Transform"><svg class="i36"><use href="#t-trn"/></svg></button></div>
          <div class="tg"><button class="more" aria-label="Annotate"><svg class="i36"><use href="#t-ann"/></svg></button><button aria-label="Measure"><svg class="i36"><use href="#t-mea"/></svg></button></div>
          <div class="tg one"><button class="more" aria-label="Add cube"><svg class="i36"><use href="#t-add"/></svg></button></div>
        </div>
      </div>
      <div class="over vtext"><div>User Perspective</div><div>(1) Scene Collection</div></div>
      <div class="over ms-auto d-flex flex-column align-items-end">
        <div class="opt-pad"><button class="ub ub-menu lbl ps-2">Options<svg class="ms-1" width="12" height="12"><use href="#chev"/></svg></button></div>
        <div class="d-flex align-items-start">
          <div class="navs">
            <button class="navb" aria-label="Perspective"><svg class="i20"><use href="#n-per"/></svg></button><button class="navb" aria-label="Camera view"><svg class="i20"><use href="#movg"/></svg></button><button class="navb" aria-label="Pan"><svg width="24" height="24"><use href="#n-han"/></svg></button><button class="navb" aria-label="Zoom"><svg class="i20"><use href="#n-zom"/></svg></button>
          </div>
          <svg width="99" height="100" class="mt-3" viewBox="955 176 99 100" font-size="14" font-weight="500" text-anchor="middle">
            <circle cx="1004" cy="260" r="9" fill="#4c6376" stroke="#2d6ea8" stroke-width="1.500"/><circle cx="988" cy="208" r="9" fill="#7c5a5f" stroke="#b84a5a" stroke-width="1.500"/><circle cx="967" cy="232" r="10" fill="#468e46" stroke="#26d626" stroke-width="1.500"/>
            <path d="M1004 224v-30" stroke="#1b75c8" stroke-width="2"/><path d="m1004 224 30-7" stroke="#2ac42a" stroke-width="2"/><path d="m1004 224 10 12" stroke="#f03050" stroke-width="2"/>
            <circle cx="1003" cy="188" r="10" fill="#1777cc"/><circle cx="1040" cy="216" r="10" fill="#23c923"/><circle cx="1020" cy="240" r="11" fill="#ff3352"/>
            <text x="1003" y="193">Z</text><text x="1040" y="221">Y</text><text x="1020" y="245">X</text>
          </svg>
          <button class="peek rounded-start" aria-label="Show sidebar"><svg width="12" height="14"><path d="m8 3-4 4 4 4" fill="none" stroke="#aaa" stroke-width="1.500"/></svg></button>
        </div>
        <button class="peek-up mt-auto me-4 rounded-top" aria-label="Show asset shelf"><svg width="22" height="10"><path d="m7 8 4-5 4 5" fill="none" stroke="#aaa" stroke-width="1.500"/></svg></button>
      </div>
    </div>
  </section>

  <section class="area" aria-label="UV Editor" style="background:#292929">
    <div class="hdr">
      <button class="ub me-2" aria-label="Editor type"><svg class="i20"><use href="#img"/></svg></button>
      <nav class="d-flex me-2"><a class="menu-link" href="#">Quick</a><a class="menu-link" href="#">View</a><a class="menu-link" href="#">Image</a></nav>
      <div class="btn-group"><button class="ub ub-menu lbl" aria-label="Browse image"><svg class="i20"><use href="#imgf"/></svg><svg width="12" height="12"><use href="#chev"/></svg></button><button class="ub lbl"><svg class="i20 me-2"><use href="#plus"/></svg><span class="pe-2">New</span></button><button class="ub lbl"><svg class="i20 me-2"><use href="#fold"/></svg><span class="pe-1">Open</span></button></div>
      <svg class="i20 ms-2"><use href="#pin"/></svg>
      <div class="d-flex ms-auto hdr-gap">
        <div class="btn-group"><button class="ub ub-on" aria-label="Gizmos"><svg width="24" height="23"><use href="#giz"/></svg></button><button class="ub ub-menu" aria-label="Gizmo options"><svg width="12" height="12"><use href="#chev"/></svg></button></div>
        <div class="btn-group"><button class="ub ub-on" aria-label="Overlays"><svg width="24" height="23"><use href="#ovl"/></svg></button><button class="ub ub-menu" aria-label="Overlay options"><svg width="12" height="12"><use href="#chev"/></svg></button><button class="ub ub-menu lbl ps-2">Options<svg class="ms-1" width="12" height="12"><use href="#chev"/></svg></button></div>
      </div>
    </div>
    <div class="canvas">
      <svg class="scene" viewBox="1071 132 1043 1229" preserveAspectRatio="xMidYMid slice" aria-label="UV grid">
        <path d="M1464 632.500h256v256h-256z" fill="#454545"/>
        <path id="uv" stroke="#606060" fill="none" stroke-width="1.400"/>
        <path d="M1440 888.500h18M1471 888.500h19M1464.500 863v19M1464.500 895v18" stroke="#000"/>
        <circle cx="1464.500" cy="888.500" r="12" fill="none" stroke="#fff" stroke-width="1.500"/><circle cx="1464.500" cy="888.500" r="12" fill="none" stroke="#e01818" stroke-width="1.500" stroke-dasharray="4.700 4.700"/>
      </svg>
      <div class="over shelf">
        <div class="pnl-head pnl-open"><i class="tri tri-d"></i>Tools<i class="grip"></i></div>
        <div class="tools">
          <div class="tg"><button class="on more" aria-label="Tweak"><svg class="i36"><use href="#t-sel"/></svg></button><button aria-label="Cursor"><svg class="i36"><use href="#t-cur"/></svg></button></div>
          <div class="tg"><button aria-label="Move"><svg class="i36"><use href="#t-mov"/></svg></button><button aria-label="Rotate"><svg class="i36"><use href="#t-rot"/></svg></button><button aria-label="Scale"><svg class="i36"><use href="#t-scl"/></svg></button><button aria-label="Transform"><svg class="i36"><use href="#t-trn"/></svg></button></div>
          <div class="tg one"><button class="more" aria-label="Annotate"><svg class="i36"><use href="#t-ann"/></svg></button></div>
          <div class="tg one"><button aria-label="Rip region"><svg class="i36"><use href="#t-rip"/></svg></button></div>
          <div><div class="tg"><button aria-label="Grab"><svg class="i36"><use href="#t-grab"/></svg></button><button aria-label="Relax"><svg class="i36"><use href="#t-rel"/></svg></button></div><div class="tg one border-top-0 rounded-top-0"><button aria-label="Pinch"><svg class="i36"><use href="#t-pin"/></svg></button></div></div>
        </div>
      </div>
      <div class="over ms-auto d-flex align-items-start">
        <div class="d-flex" style="gap:4px;margin:49px 35px 0 0"><button class="navb" aria-label="Pan"><svg width="24" height="24"><use href="#n-han"/></svg></button><button class="navb" aria-label="Zoom"><svg class="i20"><use href="#n-zom"/></svg></button></div>
        <div style="width:240px;margin:32px 4px 0 0">
          <div class="pnl-head pnl-open"><i class="tri tri-d"></i>Active Tool<i class="grip"></i></div>
          <div class="d-flex align-items-center rounded-bottom pb-2 ps-3" style="background:#4c4c4c;height:54px"><svg class="i36 mt-1"><use href="#t-sel"/></svg><span class="ms-1 ps-1">Tweak</span></div>
        </div>
      </div>
      <div class="over vtabs right">
        <button class="vtab active">Tool</button><button class="vtab">View</button>
      </div>
    </div>
  </section>

  <div class="d-flex flex-column" style="gap:5px;min-height:0">
    <section class="area" aria-label="Outliner" style="flex:0 0 311px;background:#404040">
      <div class="hdr hdr-side">
        <button class="ub me-2" aria-label="Editor type"><svg class="i20"><use href="#outl"/></svg></button>
        <button class="ub ub-menu lbl me-1" aria-label="Display mode"><svg class="i20"><use href="#vlay"/></svg><svg width="12" height="12"><use href="#chev"/></svg></button>
        <nav class="d-flex me-2"><a class="menu-link" href="#">View</a><a class="menu-link" href="#">Col</a></nav>
        <button class="ub" aria-label="New collection"><svg class="i20"><use href="#ncol"/></svg></button>
        <button class="ub ms-auto me-2" aria-label="Search"><svg class="i20"><use href="#mag"/></svg></button>
        <button class="ub ub-menu lbl" aria-label="Filter"><svg class="i20"><use href="#fun"/></svg><svg width="12" height="12"><use href="#chev"/></svg></button>
      </div>
      <div>
        <div class="trow"><span class="hold" style="margin:0 5px 0 25px"><svg width="23" height="21"><use href="#col"/></svg></span><span class="text-white">Scene Collection</span></div>
        <div class="trow"><i class="tri tri-d" style="margin:0 11px 0 31px;background:#b8ff7c"></i><svg class="i20"><use href="#col"/></svg><label for="cv" class="ms-2" style="color:#c8c8c8">Collection</label>
          <span class="acts"><input id="cv" type="checkbox" checked class="chk wh"><svg class="i20"><use href="#cur"/></svg><svg class="i20"><use href="#eye"/></svg><svg class="i20"><use href="#rnd"/></svg></span></div>
        <div class="trow" style="color:#8a8a8a"><i class="tri" style="margin:0 11px 0 56px;background:#aaa"></i><svg class="i20" opacity=".7"><use href="#mov"/></svg><span class="ms-2">Camera</span><span class="hold" style="margin-left:24px"><svg width="23" height="20"><use href="#movg"/></svg></span>
          <span class="acts"><svg class="i20"><use href="#cur"/></svg><svg class="i20"><use href="#eyex"/></svg><svg class="i20"><use href="#rnd"/></svg></span></div>
        <div class="trow" style="color:#8a8a8a"><i class="tri" style="margin:0 11px 0 56px;background:#aaa"></i><svg class="i20"><use href="#bulb"/></svg><span class="ms-2">Light</span><svg width="20" height="20" style="margin-left:26px"><circle cx="10" cy="10" r="8" fill="none" stroke="#8f8c22" stroke-width="1.500"/><circle cx="10" cy="10" r="3" fill="#9c9a24"/></svg>
          <span class="acts"><svg class="i20"><use href="#cur"/></svg><svg class="i20"><use href="#eyex"/></svg><svg class="i20"><use href="#rnd"/></svg></span></div>
        <div class="trow"></div><div class="trow"></div><div class="trow"></div><div class="trow"></div><div class="trow"></div><div class="trow"></div><div class="trow"></div><div class="trow"></div>
      </div>
    </section>
    <section class="area flex-grow-1" aria-label="Properties" style="background:#404040">
      <div class="hdr hdr-side" style="padding-right:9px">
        <button class="ub" aria-label="Editor type"><svg class="i20"><use href="#tree"/></svg></button>
        <div class="fld findbox"><svg class="i20 mx-1 me-2"><use href="#mag"/></svg><input type="search" placeholder="Search" aria-label="Search"></div>
        <button class="ub ub-menu ms-auto" aria-label="Options"><svg width="12" height="12"><use href="#chev"/></svg></button>
      </div>
      <div class="d-flex flex-grow-1">
        <div class="ptabs">
          <button class="ptab" aria-label="Render"><svg class="i20"><use href="#rnd"/></svg></button><button class="ptab" aria-label="Output"><svg class="i20"><use href="#prn"/></svg></button><button class="ptab" aria-label="View layer"><svg class="i20"><use href="#vlay"/></svg></button><button class="ptab on" aria-label="Scene"><svg class="i20"><use href="#scn"/></svg></button><button class="ptab" aria-label="World"><svg class="i20"><use href="#wld"/></svg></button>
        </div>
        <div class="flex-grow-1" style="padding:0 4px 0 5px;min-width:0">
          <div class="d-flex align-items-center" style="padding:11px 8px 0"><svg class="i20"><use href="#scn"/></svg><span style="margin-left:10px">Scene</span><svg class="i20 ms-auto"><use href="#pin"/></svg></div>
          <div class="d-flex align-items-center" style="padding:24px 5px 12px"><label class="lab" for="eng" style="width:161px">Render Engine</label>
            <span class="position-relative flex-grow-1"><select id="eng" class="eng"><option>EEVEE</option><option>Workbench</option><option>Cycles</option></select><svg class="position-absolute top-50 end-0 translate-middle-y me-1 pe-none" width="12" height="12"><use href="#chev"/></svg></span></div>
          <div class="pnl-head pnl-open"><i class="tri tri-d"></i>Scene<i class="grip"></i></div>
          <div class="d-flex flex-column rounded-bottom" style="background:#4c4c4c;padding:10px;gap:7px">
            <div class="btn-group d-flex"><button class="ub ub-menu" style="width:40px" aria-label="Browse scene"><svg class="i20"><use href="#scn"/></svg><svg width="12" height="12"><use href="#chev"/></svg></button><div class="fld flex-grow-1 rounded-0 ps-2 border-start-0" style="height:25px"><input class="ps-1" value="Scene" aria-label="Scene name"><svg class="i20 me-1" opacity=".8"><use href="#pin"/></svg></div><button class="ub" aria-label="New scene"><svg class="i20"><use href="#plus"/></svg></button><button class="ub ub-dim" style="background:#4c4c4c" aria-label="Delete scene"><svg class="i20"><use href="#xx"/></svg></button></div>
            <div class="d-flex align-items-center"><label class="lab" for="f1">Camera</label><div class="fld flex-grow-1"><svg class="i20 mx-1 me-2"><use href="#cubo"/></svg><input id="f1" value="Camera"><svg class="i20 me-1"><use href="#xx"/></svg></div></div>
            <div class="d-flex align-items-center"><label class="lab" for="f2">Background Scene</label><div class="fld flex-grow-1"><svg class="i20 mx-1 me-2"><use href="#scn"/></svg><input id="f2" placeholder="Scene"></div></div>
            <div class="d-flex align-items-center"><label class="lab" for="f3">Active Clip</label><div class="fld flex-grow-1"><svg class="i20 mx-1 me-2"><use href="#clip"/></svg><input id="f3" placeholder="Movie Clip"></div></div>
          </div>
          <div class="d-flex flex-column" style="gap:2px;margin-top:2px">
            <div class="pnl-head"><i class="tri"></i>Units<i class="grip"></i></div>
            <div class="pnl-head"><i class="tri"></i><input id="gv" type="checkbox" checked class="chk me-1"><label for="gv">Gravity</label><i class="grip"></i></div>
            <div class="pnl-head"><i class="tri"></i>Simulation<i class="grip"></i></div>
            <div class="pnl-head"><i class="tri"></i>Keying Sets<i class="grip"></i></div>
            <div class="pnl-head"><i class="tri"></i>Audio<i class="grip"></i></div>
            <div class="pnl-head"><i class="tri"></i>Rigid Body World<i class="grip"></i></div>
            <div class="pnl-head"><i class="tri"></i>Light Probes<i class="grip"></i></div>
            <div class="pnl-head"><i class="tri"></i>Animation<i class="grip"></i></div>
            <div class="pnl-head"><i class="tri"></i>Custom Properties<i class="grip"></i></div>
          </div>
        </div>
      </div>
    </section>
  </div>
</main>

<footer class="status d-flex align-items-center">
  <svg width="16" height="22"><use href="#m-l"/></svg><span class="me-2 pe-1">Select</span>
  <svg width="16" height="22"><use href="#m-m"/></svg><span class="ms-1 me-2">Pan View</span>
  <svg width="16" height="22"><use href="#m-r"/></svg><span>Rotate View</span>
  <svg class="i20 ms-auto me-2"><use href="#bfa"/></svg><span class="me-2">|</span><span class="me-1">4.5.0</span>
</footer>

<script>
// Floor grid: project (X, Y) on the ground plane to the viewport
const W = (X, Y) => 1 - 0.05466 * X + 0.02403 * Y;
const P = (X, Y) => { const w = W(X, Y); return [(534.3 - 5.18 * X + 66.16 * Y) / w, (728.9 - 16.24 * X + 6.28 * Y) / w].map(v => v.toFixed(1)).join(' '); };
const alongY = (X, far) => `M${P(X, (0.12 - 1 + 0.05466 * X) / 0.02403)}L${P(X, far)}`;
const alongX = (Y, far) => `M${P((0.88 + 0.02403 * Y) / 0.05466, Y)}L${P(-far, Y)}`;
let a = '', b = '';
for (let i = -90; i <= 15; i++) if (i % 10) a += alongY(i, 400);
for (let i = -45; i <= 130; i++) if (i % 10) a += alongX(i, 400);
for (let i = -400; i <= 10; i += 10) if (i) b += alongY(i, 900);
for (let i = -200; i <= 400; i += 10) if (i) b += alongX(i, 900);
document.getElementById('minor').setAttribute('d', a);
document.getElementById('major').setAttribute('d', b);
document.getElementById('axx').setAttribute('d', alongX(0, 400));
document.getElementById('axy').setAttribute('d', alongY(0, 400));
let u = '';
for (let i = 0; i <= 8; i++) u += `M${1464 + 32 * i} 632v257M1464 ${632.5 + 32 * i}h256`;
document.getElementById('uv').setAttribute('d', u);
</script>
</body>
</html>
